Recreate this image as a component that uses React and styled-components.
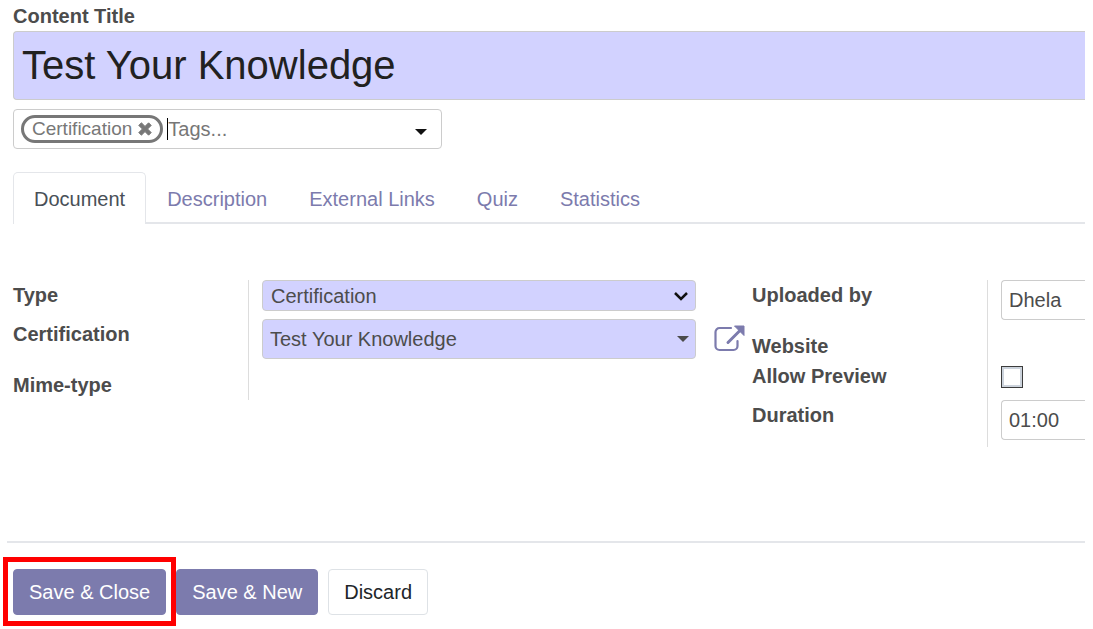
import React, { useState } from 'react';
import styled, { createGlobalStyle, css, ThemeProvider } from 'styled-components';

const theme = {
  colours: {
    primary: '#7c7bad',
    required: '#d2d2ff',
    text: '#4c4c4c',
    border: '#cccccc',
    line: '#e4e6ea',
    highlight: '#ff0000',
  },
};

const GlobalStyle = createGlobalStyle`
  * {
    box-sizing: border-box;
  }

  body {
    margin: 0;
    background: #ffffff;
    color: #4c4c4c;
    font-family: 'Liberation Sans', Arial, sans-serif;
    font-size: 20px;
    line-height: 30px;
  }

  input,
  select,
  button {
    margin: 0;
    font: inherit;
    color: inherit;
  }
`;

const Form = styled.form`
  margin-right: 8px;
  padding: 1px 0 3px;
  overflow: hidden;
`;

const Header = styled.header`
  display: flex;
  flex-direction: column;
  align-items: flex-start;
  padding-left: 13px;
`;

const Label = styled.label`
  font-weight: bold;
`;

const box = css`
  border: 1px solid ${({ theme }) => theme.colours.border};
  border-radius: 4px;
  outline: none;
  background: ${({ theme, $required }) => ($required ? theme.colours.required : '#ffffff')};
`;

/* fields that run on past the right edge of the dialog */
const cutOff = css`
  border-right: none;
  border-top-right-radius: 0;
  border-bottom-right-radius: 0;
`;

const TitleInput = styled.input`
  ${box}
  ${cutOff}
  width: 100%;
  height: 69px;
  padding: 0 8px;
  color: #212121;
  font-size: 40px;
`;

const TagField = styled.div`
  ${box}
  display: flex;
  align-items: center;
  width: 40%;
  height: 40px;
  margin-top: 9px;
  padding: 0 14px 1px 7px;
`;

const Tag = styled.span`
  display: flex;
  flex: none;
  align-items: center;
  gap: 6px;
  height: 28px;
  padding: 0 8px;
  border: 3px solid #777777;
  border-radius: 14px;
  color: #777777;
  font-size: 19px;
`;

const IconButton = styled.button`
  display: flex;
  flex: none;
  padding: 0;
  border: none;
  background: none;
  color: ${({ theme, $primary }) => ($primary ? theme.colours.primary : 'inherit')};
  cursor: pointer;
`;

const Cursor = styled.span`
  flex: none;
  width: 1px;
  height: 22px;
  margin-left: 4px;
  background: #000000;
`;

const TagInput = styled.input`
  flex: 1;
  min-width: 0;
  padding: 0;
  border: none;
  outline: none;
  background: none;

  &::placeholder {
    color: #777777;
    opacity: 1;
  }
`;

const Caret = styled.span`
  flex: none;
  margin-top: ${({ $low }) => ($low ? 6 : 0)}px;
  border: 6px solid transparent;
  border-top-color: ${({ $low }) => ($low ? '#111111' : '#4c4c4c')};
  border-bottom: none;
`;

const Tabs = styled.nav`
  display: flex;
  margin: 23px 0 0 13px;
  border-bottom: 2px solid ${({ theme }) => theme.colours.line};
`;

const Tab = styled.a`
  margin-bottom: -2px;
  padding: 11px 20px 10px;
  border: 1px solid transparent;
  border-bottom: none;
  border-radius: 5px 5px 0 0;
  color: ${({ theme }) => theme.colours.primary};
  text-decoration: none;

  ${({ $active, theme }) =>
    $active &&
    css`
      border-color: ${theme.colours.line};
      background: #ffffff;
      color: #495057;
    `}
`;

const Sheet = styled.section`
  display: grid;
  grid-template-columns: 739fr 333fr;
  align-items: start;
  min-height: 317px;
  padding: 56px 0 0 13px;
`;

const Group = styled.div`
  display: grid;
  grid-template-columns: minmax(0, ${({ $split }) => $split[0]}fr) minmax(0, ${({ $split }) => $split[1]}fr);
`;

const LabelCell = styled.div`
  border-right: 1px solid #dddddd;
`;

const FieldCell = styled.div`
  display: flex;
  align-items: flex-start;
  min-height: 30px;
  padding: 0 0 ${({ $gap }) => $gap || 0}px 13px;
`;

const SelectWrap = styled.div`
  position: relative;
  flex: 1;
  min-width: 0;
  margin-right: 56px;

  & > svg {
    position: absolute;
    top: 11px;
    right: 7px;
    pointer-events: none;
  }
`;

const Select = styled.select`
  ${box}
  display: block;
  width: 100%;
  height: 31px;
  padding: 0 8px;
  appearance: none;
`;

const Combo = styled.div`
  ${box}
  display: flex;
  flex: 1;
  align-items: center;
  min-width: 0;
  height: 40px;
  margin-right: 18px;
  padding: 0 6px 0 7px;
`;

const ComboInput = styled.input`
  flex: 1;
  min-width: 0;
  padding: 0;
  border: none;
  outline: none;
  background: none;
`;

const OpenRecord = styled(IconButton)`
  width: 38px;
  padding-top: 6px;
`;

const TextInput = styled.input`
  ${box}
  ${cutOff}
  width: 100%;
  height: 40px;
  padding: 0 7px;
`;

const Checkbox = styled.input`
  width: 22px;
  height: 22px;
  margin-top: 5px;
  border: 1px solid #3c3c3c;
  background: #ffffff;
  box-shadow: inset 0 0 0 2px #ccd3dc;
  appearance: none;

  &:checked {
    background: ${({ theme }) => theme.colours.primary};
  }
`;

const Footer = styled.footer`
  display: flex;
  gap: 10px;
  margin-left: 7px;
  padding: 26px 6px 11px;
  border-top: 2px solid ${({ theme }) => theme.colours.line};
`;

const Button = styled.button`
  height: 46px;
  padding: 0 15px;
  border: 1px solid ${({ theme, $primary }) => ($primary ? theme.colours.primary : '#dee2e6')};
  border-radius: 4px;
  background: ${({ theme, $primary }) => ($primary ? theme.colours.primary : '#ffffff')};
  color: ${({ $primary }) => ($primary ? '#ffffff' : '#212529')};
  white-space: nowrap;
  cursor: pointer;
`;

const Highlight = styled.div`
  position: relative;

  &::after {
    content: '';
    position: absolute;
    inset: -12px -10px -11px;
    border: 5px solid ${({ theme }) => theme.colours.highlight};
    pointer-events: none;
  }
`;

const CrossIcon = () => (
  <svg width="14" height="14" viewBox="0 0 14 14" aria-hidden="true">
    <path
      d="M3.4.8 7 4.4 10.6.8 13.2 3.4 9.6 7l3.6 3.6-2.6 2.6L7 9.6l-3.6 3.6L.8 10.6 4.4 7 .8 3.4Z"
      fill="currentColor"
      stroke="currentColor"
      strokeLinejoin="round"
    />
  </svg>
);

const ChevronIcon = () => (
  <svg width="16" height="10" viewBox="0 0 16 10" aria-hidden="true">
    <path d="M2 2l6 6 6-6" fill="none" stroke="#111111" strokeWidth="2.5" />
  </svg>
);

const ExternalIcon = () => (
  <svg width="31" height="27" viewBox="0 0 31 27" aria-hidden="true">
    <path
      d="M17 3H5.5A4 4 0 0 0 1.5 7v14a4 4 0 0 0 4 4h14a4 4 0 0 0 4-4v-5"
      fill="none"
      stroke="currentColor"
      strokeWidth="2.2"
      strokeLinecap="round"
    />
    <path d="M14 17.5 26 5.5" stroke="currentColor" strokeWidth="3" strokeLinecap="round" />
    <path d="M20.5 1h9.5v9.5Z" fill="currentColor" stroke="currentColor" strokeLinejoin="round" />
  </svg>
);

const tabs = ['Document', 'Description', 'External Links', 'Quiz', 'Statistics'];

export default () => {
  const [active, setActive] = useState('Document');

  const handleTab = (e, tab) => {
    e.preventDefault();
    setActive(tab);
  };

  return (
    <ThemeProvider theme={theme}>
      <GlobalStyle />
      <Form onSubmit={e => e.preventDefault()}>
        <Header>
          <Label htmlFor="title">Content Title</Label>
          <TitleInput id="title" $required defaultValue="Test Your Knowledge" />
          <TagField>
            <Tag>
              Certification
              <IconButton type="button" aria-label="Remove Certification">
                <CrossIcon />
              </IconButton>
            </Tag>
            <Cursor />
            <TagInput aria-label="Tags" placeholder="Tags..." />
            <Caret $low />
          </TagField>
        </Header>

        <Tabs>
          {tabs.map(tab => (
            <Tab key={tab} href="#" $active={tab === active} onClick={e => handleTab(e, tab)}>
              {tab}
            </Tab>
          ))}
        </Tabs>

        <Sheet>
          <Group $split={[236, 503]}>
            <LabelCell>
              <Label htmlFor="type">Type</Label>
            </LabelCell>
            <FieldCell $gap={8}>
              <SelectWrap>
                <Select id="type" $required defaultValue="Certification">
                  <option>Certification</option>
                </Select>
                <ChevronIcon />
              </SelectWrap>
            </FieldCell>

            <LabelCell>
              <Label htmlFor="certification">Certification</Label>
            </LabelCell>
            <FieldCell $gap={11}>
              <Combo $required>
                <ComboInput id="certification" defaultValue="Test Your Knowledge" />
                <Caret />
              </Combo>
              <OpenRecord type="button" $primary aria-label="Open certification">
                <ExternalIcon />
              </OpenRecord>
            </FieldCell>

            <LabelCell>
              <Label as="span">Mime-type</Label>
            </LabelCell>
            <FieldCell />
          </Group>

          <Group $split={[236, 97]}>
            <LabelCell>
              <Label htmlFor="uploader">Uploaded by</Label>
            </LabelCell>
            <FieldCell $gap={11}>
              <TextInput id="uploader" defaultValue="Dhela" />
            </FieldCell>

            <LabelCell>
              <Label as="span">Website</Label>
            </LabelCell>
            <FieldCell />

            <LabelCell>
              <Label htmlFor="preview">Allow Preview</Label>
            </LabelCell>
            <FieldCell $gap={12}>
              <Checkbox id="preview" type="checkbox" />
            </FieldCell>

            <LabelCell>
              <Label htmlFor="duration">Duration</Label>
            </LabelCell>
            <FieldCell $gap={7}>
              <TextInput id="duration" defaultValue="01:00" />
            </FieldCell>
          </Group>
        </Sheet>

        <Footer>
          <Highlight>
            <Button type="submit" $primary>
              Save &amp; Close
            </Button>
          </Highlight>
          <Button type="button" $primary>
            Save &amp; New
          </Button>
          <Button type="button">Discard</Button>
        </Footer>
      </Form>
    </ThemeProvider>
  );
};
